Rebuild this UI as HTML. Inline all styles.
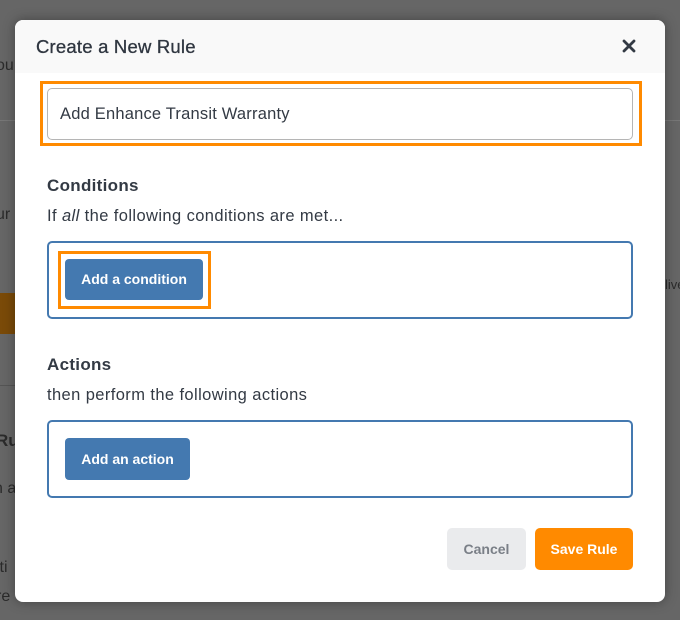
<!DOCTYPE html>
<html><head><style>
body{margin:0;width:680px;height:620px;background:#666;position:relative;overflow:hidden;font-family:"Liberation Sans",sans-serif;}
.bg{position:absolute;color:#2b2b2b;font-size:16px;}
.modal{position:absolute;left:15px;top:20px;width:650px;height:582px;background:#fff;border-radius:8px;overflow:hidden;box-shadow:0 0 12px rgba(0,0,0,.35);}
.hdr{height:53px;background:#f9f9f9;}
.title{position:absolute;left:21px;top:16px;font-size:18.5px;color:#2f3640;letter-spacing:0.2px;-webkit-text-stroke:0.3px #2f3640;}
.x{position:absolute;left:607px;top:19px;}
.abs{position:absolute;}
.lbl{font-size:17px;font-weight:bold;color:#333a44;letter-spacing:0.3px;}
.sub{font-size:16.5px;color:#333a44;letter-spacing:0.4px;}
.box{border:2px solid #4479b0;border-radius:5px;box-sizing:border-box;}
.btn{background:#4479b0;color:#fff;font-weight:bold;font-size:14px;border-radius:4px;box-sizing:border-box;text-align:center;}
</style></head><body>
<div class="bg" style="left:-4px;top:57px">ou</div>
<div class="bg" style="left:-4px;top:206px">ur</div>
<div class="abs" style="left:0;top:293px;width:15px;height:41px;background:#7a4a08"></div>
<div class="abs" style="left:0;top:120px;width:15px;height:1px;background:#777"></div>
<div class="abs" style="left:0;top:385px;width:15px;height:1px;background:#555"></div>
<div class="bg" style="left:-4px;top:431px;font-weight:bold;font-size:17px">Ru</div>
<div class="bg" style="left:-6px;top:480px">n a</div>
<div class="bg" style="left:-4px;top:559px">iti</div>
<div class="bg" style="left:-4px;top:588px">re</div>
<div class="bg" style="left:665px;top:277px;font-size:13px">live</div>
<div class="abs" style="left:665px;top:120px;width:15px;height:1px;background:#777"></div>
<div class="modal">
<div class="hdr"></div>
<div class="title">Create a New Rule</div>
<svg class="x" width="14" height="14" viewBox="0 0 14 14"><path d="M2 2L12 12M12 2L2 12" stroke="#333a44" stroke-width="2.8" stroke-linecap="round"/></svg>
<div class="abs" style="left:25px;top:61px;width:602px;height:65px;border:3px solid #ff8a00;box-sizing:border-box"></div>
<div class="abs" style="left:32px;top:68px;width:586px;height:52px;border:1px solid #b5b5b5;border-radius:5px;box-sizing:border-box;font-size:16.5px;color:#333a44;padding:16px 0 0 12px;letter-spacing:0.2px">Add Enhance Transit Warranty</div>
<div class="abs lbl" style="left:32px;top:156px">Conditions</div>
<div class="abs sub" style="left:32px;top:187px">If <i>all</i> the following conditions are met...</div>
<div class="abs box" style="left:32px;top:221px;width:586px;height:78px"></div>
<div class="abs" style="left:43px;top:231px;width:153px;height:58px;border:3px solid #ff8a00;box-sizing:border-box"></div>
<div class="abs btn" style="left:50px;top:239px;width:138px;height:41px;line-height:41px">Add a condition</div>
<div class="abs lbl" style="left:32px;top:335px">Actions</div>
<div class="abs sub" style="left:32px;top:366px">then perform the following actions</div>
<div class="abs box" style="left:32px;top:400px;width:586px;height:78px"></div>
<div class="abs btn" style="left:50px;top:418px;width:125px;height:42px;line-height:42px">Add an action</div>
<div class="abs" style="left:432px;top:508px;width:79px;height:42px;line-height:42px;background:#eaebed;color:#7a7f87;font-weight:bold;font-size:14px;border-radius:5px;text-align:center">Cancel</div>
<div class="abs" style="left:520px;top:508px;width:98px;height:42px;line-height:42px;background:#ff8a00;color:#fff;font-weight:bold;font-size:14px;border-radius:5px;text-align:center">Save Rule</div>
</div>
</body></html>
